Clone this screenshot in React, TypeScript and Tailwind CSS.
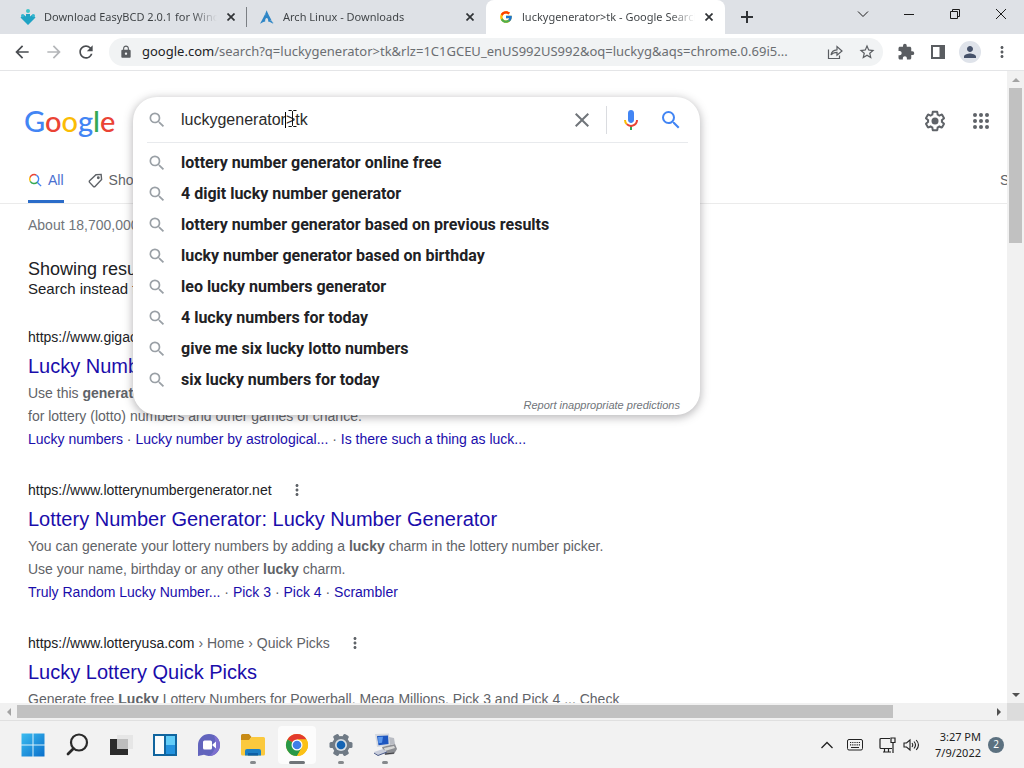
import type { ReactNode } from "react";
import {
    MdArrowBack,
    MdArrowForward,
    MdClose,
    MdExtension,
    MdLock,
    MdMoreVert,
    MdPerson,
    MdRefresh,
    MdSearch,
    MdStarBorder,
} from "react-icons/md";
import { FcGoogle } from "react-icons/fc";
import { SiArchlinux } from "react-icons/si";

const UI_FONT = "font-['Noto_Sans','Open_Sans',sans-serif]";

const suggestions = [
    "lottery number generator online free",
    "4 digit lucky number generator",
    "lottery number generator based on previous results",
    "lucky number generator based on birthday",
    "leo lucky numbers generator",
    "4 lucky numbers for today",
    "give me six lucky lotto numbers",
    "six lucky numbers for today",
];

interface Result {
    site: string;
    crumbs?: string;
    title: string;
    lines: ReactNode[];
    links: string[];
}

const results: Result[] = [
    {
        site: "https://www.gigacalc",
        title: "Lucky Number",
        lines: [
            <>
                Use this <b>generator</b>
            </>,
            "for lottery (lotto) numbers and other games of chance.",
        ],
        links: [
            "Lucky numbers",
            "Lucky number by astrological...",
            "Is there such a thing as luck...",
        ],
    },
    {
        site: "https://www.lotterynumbergenerator.net",
        title: "Lottery Number Generator: Lucky Number Generator",
        lines: [
            <>
                You can generate your lottery numbers by adding a <b>lucky</b>{" "}
                charm in the lottery number picker.
            </>,
            <>
                Use your name, birthday or any other <b>lucky</b> charm.
            </>,
        ],
        links: ["Truly Random Lucky Number...", "Pick 3", "Pick 4", "Scrambler"],
    },
    {
        site: "https://www.lotteryusa.com",
        crumbs: " › Home › Quick Picks",
        title: "Lucky Lottery Quick Picks",
        lines: [
            <>
                Generate free <b>Lucky</b> Lottery Numbers for Powerball, Mega
                Millions, Pick 3 and Pick 4 ... Check
            </>,
        ],
        links: [],
    },
];

/* ---------- Browser chrome ---------- */

function EasyBcdIcon() {
    return (
        <svg viewBox="0 0 16 16" className="size-4">
            <path d="M8 16 .5 8.5l3-3L6 7.500V5h4v2.500l2.500-2 3 3z" fill="#1fa3c4" />
            <circle cx="8" cy="2" r="2" fill="#3fc3c9" />
            <circle cx="2.6" cy="6.6" r="1.6" fill="#35b6cf" />
            <circle cx="13.4" cy="6.6" r="1.6" fill="#35b6cf" />
        </svg>
    );
}

interface TabProps {
    icon: ReactNode;
    title: string;
    active?: boolean;
    divider?: boolean;
}

function Tab({ icon, title, active, divider }: TabProps) {
    return (
        <div
            className={`flex w-[239px] items-center pr-2 pl-3 ${
                active ? "rounded-t-lg bg-white" : ""
            } ${divider ? "relative" : ""}`}
        >
            <span className="flex w-4 shrink-0 justify-center">{icon}</span>
            <span
                className={`ml-2 flex-1 overflow-hidden bg-linear-to-r from-[#3c4043] from-85% bg-clip-text text-[11px] whitespace-nowrap text-transparent ${
                    active ? "to-white" : "to-[#dee1e6]"
                }`}
            >
                {title}
            </span>
            <button
                aria-label="Close tab"
                className="ml-1.5 flex size-4 shrink-0 items-center justify-center text-[#303336]"
            >
                <svg viewBox="0 0 8 8" className="size-2" stroke="currentColor" strokeWidth="1.7">
                    <path d="M.5.5l7 7M7.5.5l-7 7" />
                </svg>
            </button>
            {divider && (
                <span className="absolute right-0 h-5 w-px bg-[#7b7f84]" />
            )}
        </div>
    );
}

function CaptionButton({ label, children }: { label: string; children: ReactNode }) {
    return (
        <button aria-label={label} className="flex w-[46px] items-center justify-center">
            <svg viewBox="0 0 12 12" className="size-3" fill="none" stroke="#1b1b1b">
                {children}
            </svg>
        </button>
    );
}

function TabStrip() {
    return (
        <div className={`flex h-[34px] shrink-0 bg-[#dee1e6] pl-2 ${UI_FONT}`}>
            <Tab icon={<EasyBcdIcon />} title="Download EasyBCD 2.0.1 for Windows" divider />
            <Tab
                icon={<SiArchlinux className="size-3.5 text-[#2f86c6]" />}
                title="Arch Linux - Downloads"
            />
            <Tab
                icon={<FcGoogle className="size-3.5" />}
                title="luckygenerator>tk - Google Search"
                active
            />
            <button aria-label="New tab" className="ml-2 flex w-7 items-center justify-center">
                <svg viewBox="0 0 12 12" className="size-3" stroke="#303336" strokeWidth="2">
                    <path d="M6 0v12M0 6h12" />
                </svg>
            </button>
            <div className="ml-auto flex h-7">
                <CaptionButton label="Search tabs">
                    <path d="M1 3.5l5 5 5-5" />
                </CaptionButton>
                <CaptionButton label="Minimize">
                    <path d="M1 6.5h10" />
                </CaptionButton>
                <CaptionButton label="Restore">
                    <path d="M1.5 3.5h7v7h-7zM3.5 3.5v-2h7v7h-2" />
                </CaptionButton>
                <CaptionButton label="Close">
                    <path d="M1 1l10 10M11 1L1 11" />
                </CaptionButton>
            </div>
        </div>
    );
}

function ToolButton({ label, children }: { label: string; children: ReactNode }) {
    return (
        <button
            aria-label={label}
            className="flex w-8 shrink-0 items-center justify-center text-[#5a5d61]"
        >
            {children}
        </button>
    );
}

function Toolbar() {
    return (
        <div
            className={`flex h-[37px] shrink-0 border-b border-[#e4e5e7] bg-white px-1.5 ${UI_FONT}`}
        >
            <ToolButton label="Back">
                <MdArrowBack className="size-5 text-[#4a4d51]" />
            </ToolButton>
            <ToolButton label="Forward">
                <MdArrowForward className="size-5 text-[#b4b6b9]" />
            </ToolButton>
            <ToolButton label="Reload">
                <MdRefresh className="size-5 text-[#4a4d51]" />
            </ToolButton>
            <div className="mx-[7px] my-1 flex min-w-0 flex-1 items-center rounded-full bg-[#f1f3f4] pl-2.5">
                <MdLock className="size-3.5 shrink-0 text-[#5a5d61]" />
                <div className="ml-[9px] min-w-0 flex-1 overflow-hidden text-[13px] whitespace-nowrap text-[#6b6e72]">
                    <span className="text-[#202124]">google.com</span>
                    /search?q=luckygenerator&gt;tk&amp;rlz=1C1GCEU_enUS992US992&amp;oq=luckyg&amp;aqs=chrome.0.69i5...
                </div>
                <ToolButton label="Share">
                    <svg viewBox="0 0 16 16" className="size-4" fill="none" stroke="currentColor" strokeWidth="1.2">
                        <path d="M1.500 5.500v9h11v-3" />
                        <path d="M4 11c.6-3.500 2.600-5 6-5.200V2.500L15 7l-5 4.300V8.300C7.500 8.300 5.600 9 4 11z" />
                    </svg>
                </ToolButton>
                <ToolButton label="Bookmark this tab">
                    <MdStarBorder className="size-[18px]" />
                </ToolButton>
            </div>
            <ToolButton label="Extensions">
                <MdExtension className="size-[18px]" />
            </ToolButton>
            <ToolButton label="Side panel">
                <svg viewBox="0 0 14 14" className="size-3.5">
                    <path d="M1 1h12v12H1z" fill="none" stroke="currentColor" strokeWidth="2" />
                    <path d="M8.500 1H13v12H8.500z" fill="currentColor" />
                </svg>
            </ToolButton>
            <ToolButton label="Profile">
                <span className="flex size-[22px] items-center justify-center rounded-full bg-[#dfe3ea]">
                    <MdPerson className="size-[18px] text-[#46526a]" />
                </span>
            </ToolButton>
            <ToolButton label="Menu">
                <MdMoreVert className="size-[18px]" />
            </ToolButton>
        </div>
    );
}

/* ---------- Search page ---------- */

function GoogleLogo() {
    return (
        <a
            href="#"
            aria-label="Google"
            className="font-['Lato',sans-serif] text-[29px] leading-[48px] font-medium"
        >
            <span className="text-[#4285f4]">G</span>
            <span className="text-[#ea4335]">o</span>
            <span className="text-[#fbbc05]">o</span>
            <span className="text-[#4285f4]">g</span>
            <span className="text-[#34a853]">l</span>
            <span className="text-[#ea4335]">e</span>
        </a>
    );
}

function MicIcon() {
    return (
        <svg viewBox="0 0 24 24" className="size-6">
            <path
                fill="#4285f4"
                d="M12 15c1.660 0 3-1.310 3-2.970V4.980C15 3.320 13.660 2 12 2S9 3.320 9 4.980v7.050C9 13.690 10.340 15 12 15z"
            />
            <path fill="#34a853" d="M11 18.080h2V22h-2z" />
            <path
                fill="#fbbc05"
                d="M7.050 16.870A6.900 6.900 0 0 1 5 12h2c0 1.370.56 2.450 1.460 3.450z"
            />
            <path
                fill="#ea4335"
                d="M12 16.930a4.970 4.970 0 0 1-3.540-1.480l-1.410 1.420A6.900 6.900 0 0 0 12 18.900c3.870 0 6.990-3 6.990-6.900H17c0 2.700-2.240 4.930-5 4.930z"
            />
        </svg>
    );
}

function SearchBox() {
    return (
        <div className="absolute inset-x-0 top-0 z-10 rounded-3xl bg-white shadow-[0_2px_8px_1px_rgba(64,60,67,0.35)]">
            <div className="flex h-[45px] items-center pr-[9px] pl-3.5">
                <MdSearch className="size-5 shrink-0 text-[#9aa0a6]" />
                <div className="relative ml-3.5 min-w-0 flex-1">
                    <input
                        aria-label="Search"
                        defaultValue="luckygenerator>tk"
                        className="w-full text-[16px] leading-6 text-[#2b2b2b] outline-none"
                    />
                    <span className="absolute top-1 left-[104px] h-4 w-px bg-black" />
                    {/* Mouse pointer */}
                    <svg viewBox="0 0 9 17" className="absolute top-0.5 left-[107px] h-[17px] w-[9px]" fill="none" stroke="#111">
                        <path d="M.5.500h3l1 1 1-1h3M4.500 1.500v14M.5 16.500h3l1-1 1 1h3" />
                    </svg>
                </div>
                <button aria-label="Clear" className="flex w-10 justify-center text-[#70757a]">
                    <MdClose className="size-6" />
                </button>
                <span className="mx-1 h-7 w-px bg-[#dadce0]" />
                <button aria-label="Search by voice" className="flex w-10 justify-center">
                    <MicIcon />
                </button>
                <button aria-label="Search" className="flex w-10 justify-center text-[#4285f4]">
                    <MdSearch className="size-6" />
                </button>
            </div>
            <div className="mr-3 ml-3.5 border-t border-[#e8eaed]" />
            <ul className="pt-1 font-['Roboto',sans-serif] text-[16px] font-bold text-[#212124]">
                {suggestions.map((text) => (
                    <li key={text} className="flex h-[31px] items-center pl-3.5">
                        <MdSearch className="mr-3.5 size-5 shrink-0 text-[#9aa0a6]" />
                        {text}
                    </li>
                ))}
            </ul>
            <div className="flex h-5 items-center justify-end pr-5">
                <a href="#" className="text-[11px] text-[#70757a] italic">
                    Report inappropriate predictions
                </a>
            </div>
        </div>
    );
}

function PageHeader() {
    return (
        <header className="flex h-[72px] pt-[26px] pr-1.5">
            <div className="w-[133px] shrink-0 pl-6">
                <GoogleLogo />
            </div>
            <div className="relative w-[567px]">
                <SearchBox />
            </div>
            <div className="ml-auto flex items-center gap-1.5 pt-0.5">
                <button aria-label="Settings" className="flex w-10 justify-center text-[#5f6368]">
                    <svg viewBox="0 0 24 24" className="size-6" fill="currentColor">
                        <path d="M13.850 22.250h-3.700c-.74 0-1.360-.54-1.450-1.270l-.27-1.890c-.27-.14-.53-.29-.79-.46l-1.800.72c-.7.260-1.470-.03-1.810-.65L2.200 15.530c-.35-.66-.2-1.440.360-1.880l1.530-1.190c-.01-.15-.02-.3-.02-.46 0-.15.010-.31.020-.46l-1.520-1.190c-.59-.45-.74-1.260-.37-1.880l1.850-3.190c.34-.62 1.110-.9 1.790-.63l1.810.73c.26-.17.520-.32.780-.46l.27-1.910c.09-.7.710-1.250 1.440-1.250h3.700c.74 0 1.360.540 1.450 1.270l.27 1.890c.27.140.530.290.790.460l1.800-.72c.71-.26 1.480.030 1.820.650l1.840 3.180c.36.660.2 1.440-.36 1.880l-1.520 1.190c.01.150.020.300.020.460s-.01.310-.02.460l1.520 1.190c.56.450.720 1.230.370 1.860l-1.860 3.220c-.34.620-1.110.900-1.800.630l-1.800-.72c-.26.170-.52.320-.78.460l-.27 1.910c-.1.680-.72 1.220-1.460 1.220zm-3.230-2h2.760l.37-2.550.53-.22c.44-.18.880-.44 1.340-.78l.45-.34 2.380.960 1.380-2.400-2.030-1.580.07-.56c.03-.26.060-.51.060-.78s-.03-.53-.06-.78l-.07-.56 2.030-1.580-1.390-2.400-2.390.960-.45-.35c-.42-.32-.87-.58-1.330-.77l-.52-.22-.37-2.550h-2.760l-.37 2.550-.53.210c-.44.190-.88.440-1.340.790l-.45.330-2.380-.95-1.390 2.390 2.030 1.580-.07.560a7 7 0 0 0-.06.790c0 .26.020.530.060.780l.07.560-2.030 1.580 1.380 2.400 2.390-.96.45.350c.43.330.860.580 1.330.770l.53.220.38 2.550z" />
                        <circle cx="12" cy="12" r="3.500" />
                    </svg>
                </button>
                <button aria-label="Google apps" className="flex w-10 justify-center text-[#5f6368]">
                    <svg viewBox="0 0 24 24" className="size-6" fill="currentColor">
                        {[6, 12, 18].map((y) =>
                            [6, 12, 18].map((x) => <circle key={`${x}-${y}`} cx={x} cy={y} r="2" />)
                        )}
                    </svg>
                </button>
            </div>
        </header>
    );
}

function PageNav() {
    return (
        <nav className="flex h-[61px] items-end border-b border-[#ebebeb] pl-7 text-[14px] text-[#5f6368]">
            <a
                href="#"
                className="flex h-[46px] items-center gap-1.5 border-b-[3px] border-[#2b6cc9] pt-[3px] text-[#4a6fd0]"
            >
                <svg viewBox="0 0 16 16" className="size-3.5" fill="none" strokeWidth="1.600">
                    <path d="M2.600 9.500A5 5 0 0 1 2.600 4.500" stroke="#fbbc05" />
                    <path d="M2.400 5A5 5 0 0 1 9.500 2.300" stroke="#ea4335" />
                    <path d="M9.500 2.300A5 5 0 0 1 10.500 10.500L15 15" stroke="#4285f4" />
                    <path d="M10.500 10.500A5 5 0 0 1 2.600 9.500" stroke="#34a853" />
                </svg>
                All
            </a>
            <a href="#" className="ml-6 flex h-[46px] items-center gap-1.5">
                <svg viewBox="0 0 16 16" className="size-[15px]" fill="none" stroke="currentColor" strokeWidth="1.500">
                    <path d="M8.500 1.800 14 1.500 14.500 7 7.500 14.300a1.200 1.200 0 0 1-1.700 0L1.700 10a1.200 1.200 0 0 1 0-1.700z" />
                    <circle cx="11" cy="5" r=".8" fill="currentColor" />
                </svg>
                Shop
            </a>
            <a href="#" className="ml-auto flex h-[46px] w-[7px] items-center overflow-hidden">
                S
            </a>
        </nav>
    );
}

function ResultItem({ result }: { result: Result }) {
    return (
        <article className="mb-[26px] text-[14px] text-[#5f6368]">
            <div className="flex h-7 items-center">
                <cite className="whitespace-pre not-italic">
                    <span className="text-[#202124]">{result.site}</span>
                    {result.crumbs}
                </cite>
                <button aria-label="About this result" className="ml-4">
                    <MdMoreVert className="size-[18px]" />
                </button>
            </div>
            <h3 className="mb-px text-[20px] leading-[30px]">
                <a href="#" className="text-[#1a0dab]">
                    {result.title}
                </a>
            </h3>
            {result.lines.map((line, i) => (
                <p key={i} className="leading-[23px]">
                    {line}
                </p>
            ))}
            <p className="leading-[22px]">
                {result.links.map((link, i) => (
                    <span key={link}>
                        {i > 0 && " · "}
                        <a href="#" className="text-[#1a0dab]">
                            {link}
                        </a>
                    </span>
                ))}
            </p>
        </article>
    );
}

function SearchPage() {
    return (
        <div className="min-w-0 flex-1 overflow-hidden bg-white font-['Liberation_Sans',Arial,sans-serif] whitespace-nowrap">
            <PageHeader />
            <PageNav />
            <main className="pl-7">
                <p className="text-[14px] leading-[43px] text-[#70757a]">
                    About 18,700,000
                </p>
                <div className="mb-[26px] pt-2.5 text-[#202124]">
                    <p className="text-[18px] leading-6">Showing results</p>
                    <p className="text-[15px] leading-4">Search instead for</p>
                </div>
                {results.map((result) => (
                    <ResultItem key={result.title} result={result} />
                ))}
            </main>
        </div>
    );
}

/* ---------- Scrollbars ---------- */

function Arrow({ label, d, color }: { label: string; d: string; color: string }) {
    return (
        <button aria-label={label} className="flex size-[17px] shrink-0 items-center justify-center">
            <svg viewBox="0 0 8 8" className="size-2" fill={color}>
                <path d={d} />
            </svg>
        </button>
    );
}

function VerticalScrollbar() {
    return (
        <div className="flex w-[17px] shrink-0 flex-col bg-[#f1f1f1]">
            <Arrow label="Scroll up" d="M0 6l4-4 4 4z" color="#a3a3a3" />
            <div className="flex-1 px-0.5">
                <div className="h-[26%] bg-[#c1c1c1]" />
            </div>
            <Arrow label="Scroll down" d="M0 2l4 4 4-4z" color="#505050" />
        </div>
    );
}

function HorizontalScrollbar() {
    return (
        <div className="flex h-[17px] shrink-0 bg-[#f1f1f1]">
            <Arrow label="Scroll left" d="M6 0L2 4l4 4z" color="#a3a3a3" />
            <div className="flex-1 py-0.5">
                <div className="h-full w-[90%] bg-[#c1c1c1]" />
            </div>
            <Arrow label="Scroll right" d="M2 0l4 4-4 4z" color="#505050" />
            <span className="w-[17px] bg-[#dcdcdc]" />
        </div>
    );
}

/* ---------- Taskbar ---------- */

interface TaskProps {
    label: string;
    running?: boolean;
    active?: boolean;
    children: ReactNode;
}

function Task({ label, running, active, children }: TaskProps) {
    return (
        <button aria-label={label} className="flex w-11 justify-center">
            <span
                className={`relative flex h-[38px] w-[38px] items-center justify-center rounded ${
                    active ? "bg-[#fcfcfc]" : ""
                }`}
            >
                <svg viewBox="0 0 24 24" className="size-6">
                    {children}
                </svg>
                {running && (
                    <span
                        className={`absolute bottom-0 h-[3px] rounded-full ${
                            active ? "w-4 bg-[#6f7478]" : "w-1.5 bg-[#85898c]"
                        }`}
                    />
                )}
            </span>
        </button>
    );
}

function Taskbar() {
    return (
        <footer
            className={`flex h-12 shrink-0 items-center border-t border-[#e0e0e0] bg-[#f2f2f2] pr-5 pl-[11px] ${UI_FONT}`}
        >
            <Task label="Start">
                <defs>
                    <linearGradient id="win" x1="0" y1="0" x2="1" y2="1">
                        <stop offset="0" stopColor="#3cbdf0" />
                        <stop offset="1" stopColor="#0a6fcb" />
                    </linearGradient>
                </defs>
                <path d="M.5.500h23v23H.5z" fill="url(#win)" />
                <path d="M12 0v24M0 12h24" stroke="#d8f1fb" />
            </Task>
            <Task label="Search">
                <circle cx="14" cy="9.500" r="8" fill="none" stroke="#2a2a2a" strokeWidth="2.200" />
                <path d="M8.500 15.500L3 21" stroke="#2a2a2a" strokeWidth="2.800" strokeLinecap="round" />
            </Task>
            <Task label="Task view">
                <path d="M8 2h16v14H8z" fill="#e6e6e6" />
                <path d="M1 6h18v16H1z" fill="#2c2c2c" />
                <path d="M8 6h11v10H8z" fill="#bdbdbd" />
            </Task>
            <Task label="Widgets">
                <path d="M0 1h24v22H0z" fill="#10659f" />
                <path d="M2 3h9v18H2z" fill="#fafcfd" />
                <path d="M13 3h9v9h-9z" fill="#62cdf8" />
                <path d="M13 12h9v9h-9z" fill="#2393df" />
            </Task>
            <Task label="Chat">
                <path d="M12 1a11 11 0 1 1-5 20.800L1 23V12A11 11 0 0 1 12 1z" fill="#6264bd" />
                <path d="M23 12a11 11 0 0 1-11 11C18 19 20 12 17 2.200A11 11 0 0 1 23 12z" fill="#7d70cf" />
                <rect x="6" y="7.500" width="9" height="9" rx="1.500" fill="#fff" />
                <path d="M15.500 11.500l3.500-3v7l-3.500-3z" fill="#fff" />
            </Task>
            <Task label="File Explorer" running>
                <path d="M0 2.500A1.500 1.500 0 0 1 1.500 1H8l2.500 3-2 3H0z" fill="#c88b16" />
                <path d="M0 7h8l2.500-3h12A1.500 1.500 0 0 1 24 5.500V21a1.500 1.500 0 0 1-1.500 1.500h-21A1.500 1.500 0 0 1 0 21z" fill="#fbc93d" />
                <path d="M4 22.500V18a2 2 0 0 1 2-2h12a2 2 0 0 1 2 2v4.500z" fill="#1d7fc4" />
                <path d="M7 20h10v2.500H7z" fill="#0e5ea3" />
            </Task>
            <Task label="Google Chrome" running active>
                <circle cx="12" cy="12" r="11" fill="#fbc116" />
                <path d="M12 12L2.470 6.500A11 11 0 0 1 21.530 6.500H12z" fill="#e33b2e" />
                <path d="M12 12L2.470 6.500A11 11 0 0 0 12 23l4.800-8.200z" fill="#279847" />
                <path d="M12 6.500h9.530A11 11 0 0 1 12 23l4.760-8.250z" fill="#fbc116" />
                <circle cx="12" cy="12" r="5.500" fill="#fff" />
                <circle cx="12" cy="12" r="4.300" fill="#3f7ee8" />
            </Task>
            <Task label="Settings" running>
                <g fill="#6f7a85">
                    <circle cx="12" cy="12" r="9" />
                    {[30, 90, 150].map((angle) => (
                        <rect
                            key={angle}
                            x="9"
                            y="0.500"
                            width="6"
                            height="23"
                            rx="1.500"
                            transform={`rotate(${angle} 12 12)`}
                        />
                    ))}
                </g>
                <circle cx="12" cy="12" r="6" fill="#d6dde3" />
                <circle cx="12" cy="12" r="4.300" fill="#1464b4" />
            </Task>
            <Task label="Remote computer" running>
                <path d="M2 1l14-.5 1 12-13 1.500z" fill="#d5d9e0" />
                <path d="M4 3l11-.6.600 8.600-10.100 1.200z" fill="#1d56c0" />
                <path d="M5 4l5-.3-1 6-3.500.500z" fill="#5b96ea" />
                <path d="M9 14l13-3 2 5-3 5-9 1z" fill="#8b8d92" />
                <path d="M11 15l10-2 1 2-10 3z" fill="#d8d8d6" />
                <path d="M16 4l5 1 1 6-5 1z" fill="#b9bcc3" />
                <path d="M1 19l9-3 4 3-9 3.500z" fill="#c8cddb" />
                <path d="M1 20l4 2.500 9-3.500" fill="none" stroke="#4a5a88" />
                <path d="M12 21l9-1" stroke="#3c3c40" />
            </Task>

            <div className="ml-auto flex items-center">
                <button aria-label="Show hidden icons" className="flex w-7 justify-center">
                    <svg viewBox="0 0 12 8" className="h-2 w-3" fill="none" stroke="#222" strokeWidth="1.300">
                        <path d="M.5 7L6 1.500 11.500 7" />
                    </svg>
                </button>
                <button aria-label="Touch keyboard" className="flex w-7 justify-center">
                    <svg viewBox="0 0 16 12" className="h-3 w-4" fill="none" stroke="#222">
                        <rect x=".5" y=".5" width="15" height="10.500" rx="1.500" />
                        <path d="M3 3.500h10M3 5.800h10" strokeDasharray="1.200 1" strokeWidth="1.200" />
                        <path d="M4 8.500h8" />
                    </svg>
                </button>
                <button aria-label="Network" className="ml-1.5 flex w-6 justify-center">
                    <svg viewBox="0 0 17 16" className="h-4 w-[17px]" fill="none" stroke="#222" strokeWidth="1.200">
                        <path d="M11 1.500H2a1 1 0 0 0-1 1v8a1 1 0 0 0 1 1h11M5.500 11.500V15M9.500 11.500V15M4 15h8" />
                        <path d="M12 1h4v4.500h-4zM14 5.500V16" />
                    </svg>
                </button>
                <button aria-label="Volume" className="flex w-6 justify-center">
                    <svg viewBox="0 0 17 14" className="h-3.5 w-[17px]" fill="none" stroke="#222" strokeWidth="1.100">
                        <path d="M1 5v4h2.500L7 12V2L3.500 5z" />
                        <path d="M9 5q1.500 2 0 4M11 3.500q3 3.500 0 7M13.200 2q4.500 5 0 10" />
                    </svg>
                </button>
                <div className="ml-3 text-right text-[11px] leading-4 text-[#222]">
                    <div>3:27 PM</div>
                    <div>7/9/2022</div>
                </div>
                <span className="ml-[7px] flex size-4 items-center justify-center rounded-full bg-[#5c7180] text-[10px] text-white">
                    2
                </span>
            </div>
        </footer>
    );
}

export default function App() {
    return (
        <div className="flex h-screen flex-col overflow-hidden">
            <TabStrip />
            <Toolbar />
            <div className="flex min-h-0 flex-1">
                <SearchPage />
                <VerticalScrollbar />
            </div>
            <HorizontalScrollbar />
            <Taskbar />
        </div>
    );
}
